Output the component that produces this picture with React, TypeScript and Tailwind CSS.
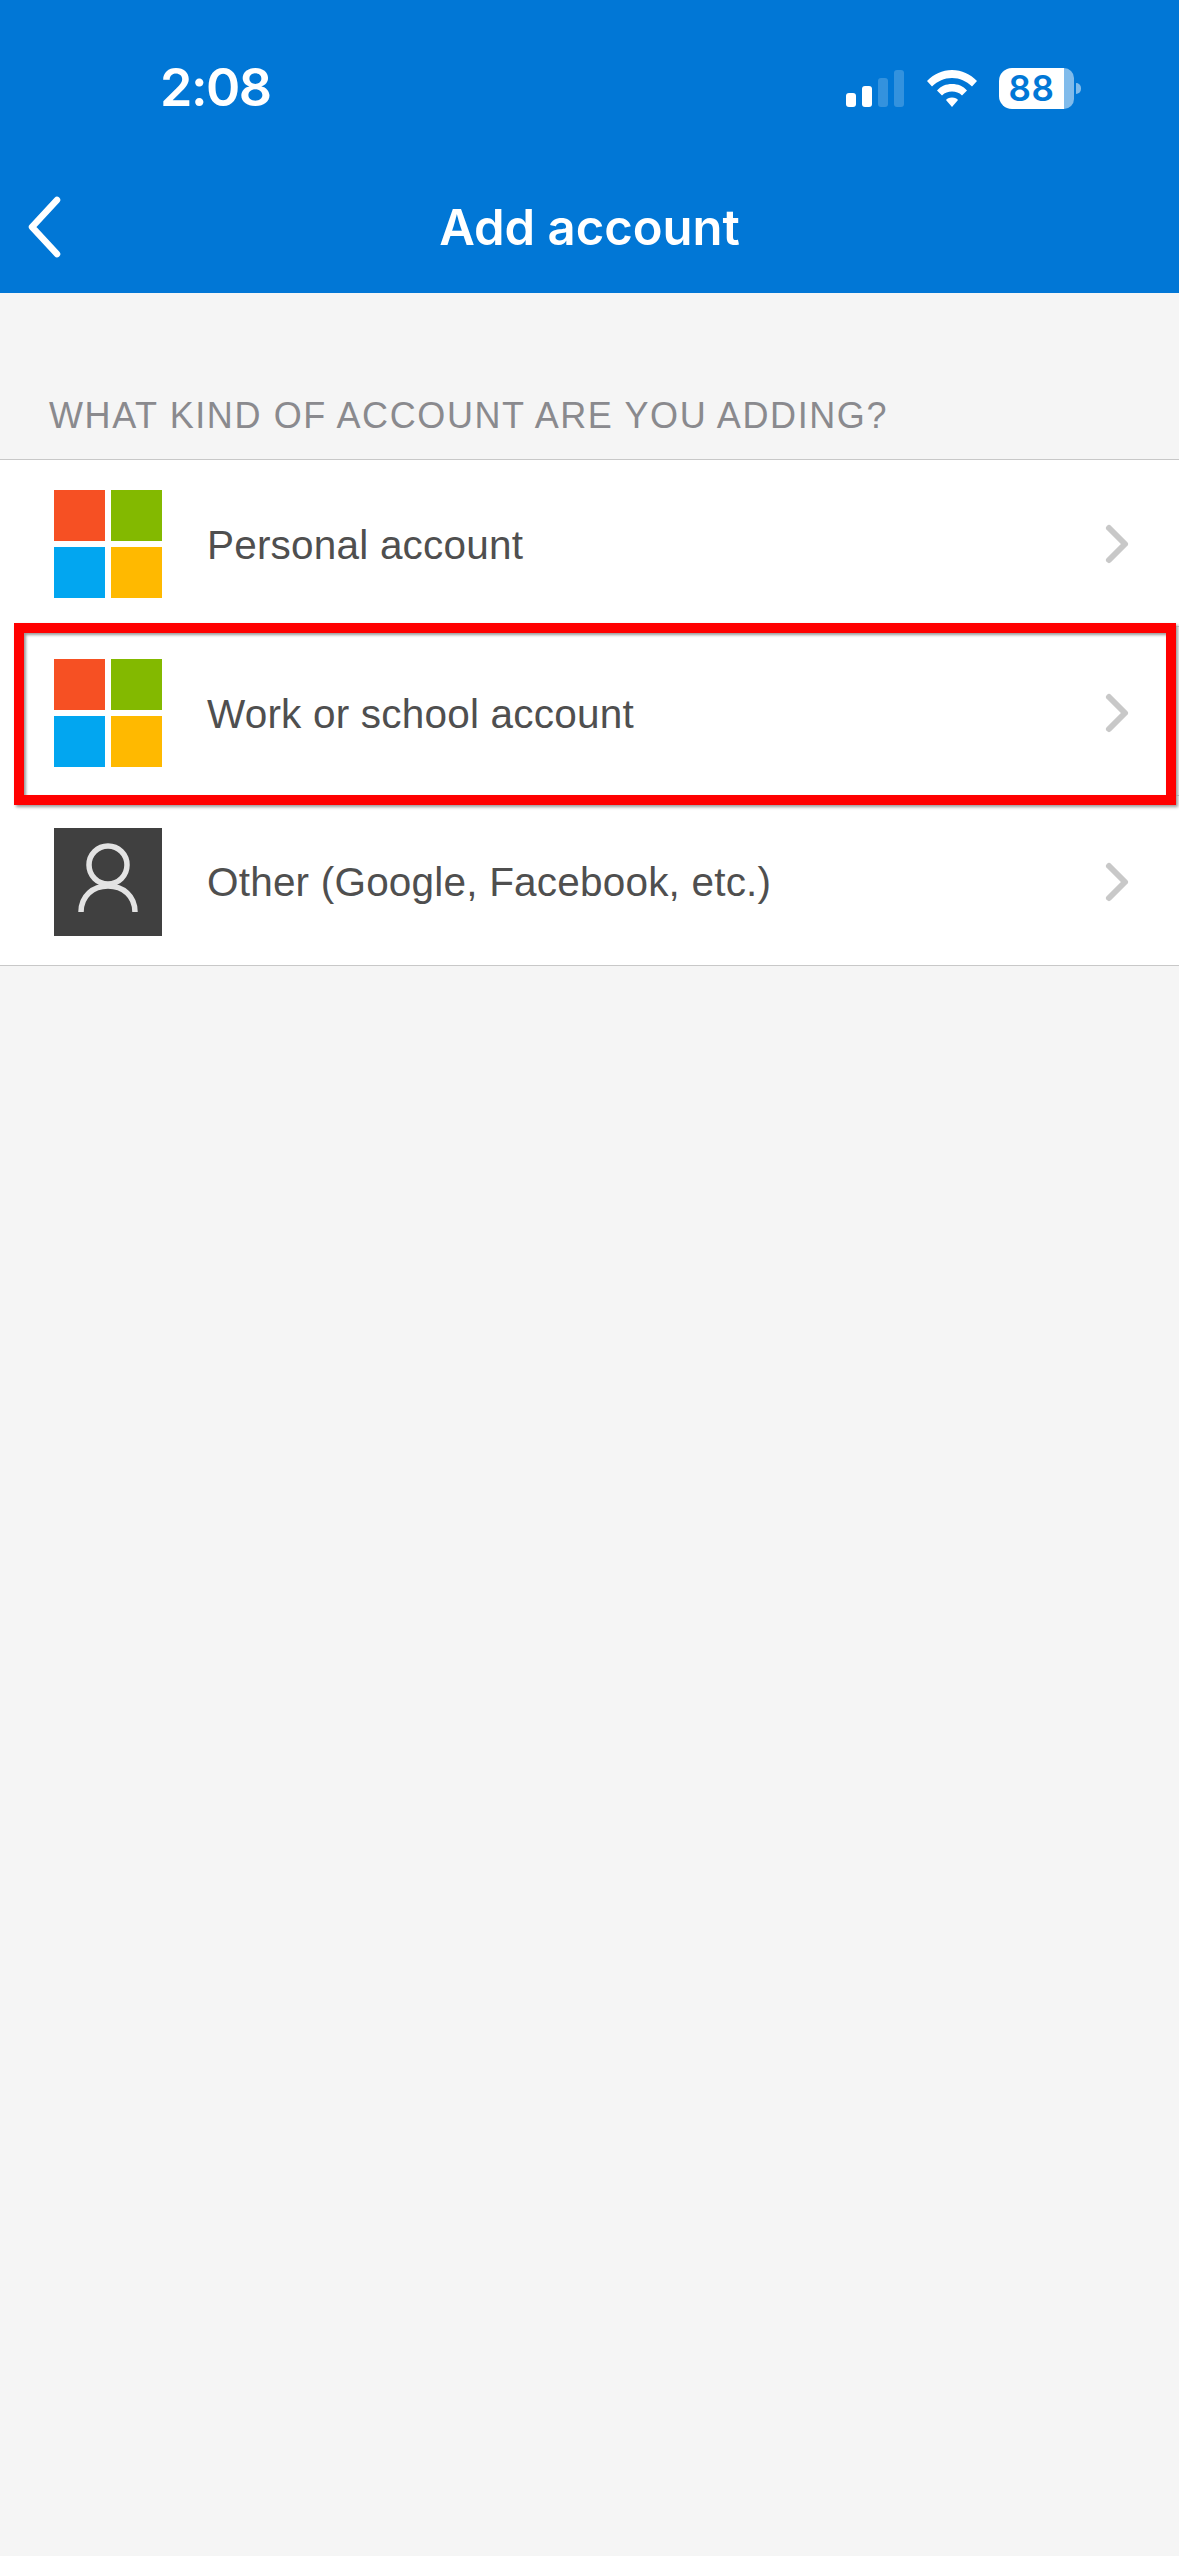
const rowFont = "font-['Liberation_Sans',Arial,sans-serif]"
const systemFont = "font-['Inter','Liberation_Sans',sans-serif]"

function MicrosoftLogo() {
  return (
    <div className="grid h-[108px] w-[108px] shrink-0 grid-cols-2 gap-[6px]">
      <div className="bg-[#f65023]" />
      <div className="bg-[#83b900]" />
      <div className="bg-[#02a6f0]" />
      <div className="bg-[#ffb900]" />
    </div>
  )
}

function PersonTile() {
  return (
    <div className="h-[108px] w-[108px] shrink-0 bg-[#404040]">
      <svg width="108" height="108" viewBox="0 0 108 108" fill="none" stroke="#e3e3e3" strokeWidth="5.5">
        <circle cx="54" cy="37" r="19" />
        <path d="M27 84 C27 68 39 58 54 58 C69 58 81 68 81 84" />
      </svg>
    </div>
  )
}

function Chevron() {
  return (
    <svg width="28" height="42" viewBox="0 0 28 42" fill="none" stroke="#c8c8c8" strokeWidth="6" strokeLinecap="round" strokeLinejoin="round" className="shrink-0">
      <path d="M5 5 L21 21 L5 37" />
    </svg>
  )
}

function SignalWifi() {
  return (
    <svg width="131" height="37" viewBox="0 0 131 37" fill="white" className="shrink-0">
      <rect x="0" y="23" width="10" height="14" rx="3" />
      <rect x="16" y="16" width="10" height="21" rx="3" />
      <rect x="32" y="8" width="10" height="29" rx="3" opacity="0.2" />
      <rect x="48" y="0" width="10" height="37" rx="3" opacity="0.2" />
      <path d="M106 0 C116 0 124 4 131 11 L126 16.5 C120 11 114 8 106 8 C98 8 92 11 86 16.5 L81 11 C88 4 96 0 106 0 Z" />
      <path d="M106 14 C112 14 117 16 121 20.5 L116 25.5 C113 22.5 110 21.5 106 21.5 C102 21.5 99 22.5 96 25.5 L91 20.5 C95 16 100 14 106 14 Z" />
      <path d="M106 27.5 C109 27.5 111 28.5 112 30 L106 37 L100 30 C101 28.5 103 27.5 106 27.5 Z" />
    </svg>
  )
}

function Battery() {
  return (
    <div className="flex items-center">
      <div className="flex h-[41px] w-[75px]">
        <div className={`flex w-[65px] items-center justify-center rounded-l-[13px] bg-white text-[35px] font-semibold tracking-[0.5px] text-[#0177d6] ${systemFont}`}>
          88
        </div>
        <div className="w-[10px] rounded-r-[13px] bg-white/50" />
      </div>
      <div className="ml-[2px] h-[11px] w-[5px] rounded-r-[5px] bg-white/50" />
    </div>
  )
}

interface RowProps {
  label: string
  icon: React.ReactNode
  last?: boolean
  highlighted?: boolean
}

function AccountRow({ label, icon, last, highlighted }: RowProps) {
  return (
    <div className={`relative flex items-center bg-white pl-[54px] pr-[47px] ${last ? 'h-[167px]' : 'h-[169px] pb-px'}`}>
      {icon}
      <span className={`ml-[45px] flex-1 pt-[2px] text-[40.5px] tracking-[0.2px] text-[#4f4f4f] ${rowFont}`}>{label}</span>
      <Chevron />
      {!last && <div className="absolute bottom-[2px] left-[208px] right-0 h-px bg-[#c8c8c8]" />}
      {highlighted && (
        <div className="absolute -bottom-[7px] -top-[6px] left-[14px] right-[3px] z-10 border-[10px] border-[#ff0000] shadow-[2px_2px_3px_#9a9a9a,inset_2px_2px_3px_#9a9a9a]" />
      )}
    </div>
  )
}

export default function App() {
  return (
    <div className="min-h-[2556px] w-[1179px] bg-[#f5f5f5]">
      <div className="h-[293px] bg-[#0177d6] text-white">
        <div className="flex h-[176px] items-center justify-between pl-[160px] pr-[98px]">
          <span className={`text-[52px] font-semibold leading-none tracking-[-1.5px] ${systemFont}`}>2:08</span>
          <div className="flex items-center gap-[22px]">
            <SignalWifi />
            <Battery />
          </div>
        </div>
        <div className="grid h-[102px] grid-cols-[1fr_auto_1fr] items-center">
          <div className="pl-[26px]">
            <svg width="38" height="62" viewBox="0 0 38 62" fill="none" stroke="white" strokeWidth="6.5" strokeLinecap="round" strokeLinejoin="round">
              <path d="M31 4 L6 31 L31 58" />
            </svg>
          </div>
          <h1 className={`text-[49px] font-semibold leading-none ${systemFont}`}>Add account</h1>
          <div />
        </div>
      </div>

      <div className={`h-[166px] pl-[49px] pt-[100px] text-[36px] leading-[46px] tracking-[1.6px] text-[#8a8a8e] ${rowFont}`}>
        WHAT KIND OF ACCOUNT ARE YOU ADDING?
      </div>

      <div className="border-y border-[#c8c8c8]">
        <AccountRow label="Personal account" icon={<MicrosoftLogo />} />
        <AccountRow label="Work or school account" icon={<MicrosoftLogo />} highlighted />
        <AccountRow label="Other (Google, Facebook, etc.)" icon={<PersonTile />} last />
      </div>
    </div>
  )
}
